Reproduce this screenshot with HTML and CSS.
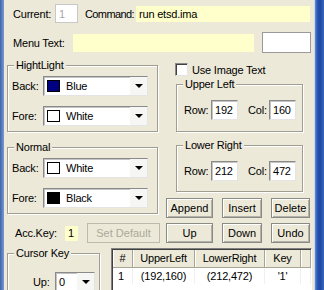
FILE: index.html
```html
<!DOCTYPE html>
<html lang="en">
<head>
    <meta charset="UTF-8">
    <title>Menu Editor</title>
    <link rel="stylesheet" href="styles.css">
</head>
<body>
<div class="window">
    <div class="edge-left"></div>
    <div class="main">

        <div class="row-top">
            <span class="lbl lbl-current">Current:</span>
            <span class="field current">1</span>
            <span class="lbl lbl-command">Command:</span>
            <span class="field yellow command">run etsd.ima</span>
        </div>

        <div class="row-menu">
            <span class="lbl lbl-menu">Menu Text:</span>
            <span class="field yellow menu-text"></span>
            <span class="field menu-extra"></span>
        </div>

        <div class="middle">
            <div class="col-left">
                <div class="group color-group">
                    <span class="legend">HightLight</span>
                    <div class="combo-row first">
                        <span class="lbl lbl-side">Back:</span>
                        <div class="combo">
                            <span class="swatch blue"></span>
                            <span class="combo-text">Blue</span>
                            <span class="arrow"></span>
                        </div>
                    </div>
                    <div class="combo-row second">
                        <span class="lbl lbl-side">Fore:</span>
                        <div class="combo">
                            <span class="swatch white"></span>
                            <span class="combo-text">White</span>
                            <span class="arrow"></span>
                        </div>
                    </div>
                </div>

                <div class="group color-group normal">
                    <span class="legend">Normal</span>
                    <div class="combo-row first">
                        <span class="lbl lbl-side">Back:</span>
                        <div class="combo">
                            <span class="swatch white"></span>
                            <span class="combo-text">White</span>
                            <span class="arrow"></span>
                        </div>
                    </div>
                    <div class="combo-row second">
                        <span class="lbl lbl-side">Fore:</span>
                        <div class="combo">
                            <span class="swatch black"></span>
                            <span class="combo-text">Black</span>
                            <span class="arrow"></span>
                        </div>
                    </div>
                </div>

                <div class="acc-row">
                    <span class="lbl lbl-acc">Acc.Key:</span>
                    <span class="field yellow acc-key">1</span>
                    <button class="btn disabled set-default">Set Default</button>
                </div>
            </div>

            <div class="col-right">
                <div class="check-row">
                    <span class="checkbox"></span>
                    <span class="lbl">Use Image Text</span>
                </div>

                <div class="group pos-group">
                    <span class="legend">Upper Left</span>
                    <div class="pos-row">
                        <span class="lbl lbl-row">Row:</span>
                        <span class="field num">192</span>
                        <span class="lbl lbl-col">Col:</span>
                        <span class="field num">160</span>
                    </div>
                </div>

                <div class="group pos-group lower">
                    <span class="legend">Lower Right</span>
                    <div class="pos-row">
                        <span class="lbl lbl-row">Row:</span>
                        <span class="field num">212</span>
                        <span class="lbl lbl-col">Col:</span>
                        <span class="field num">472</span>
                    </div>
                </div>

                <div class="btn-row first">
                    <button class="btn w-wide">Append</button>
                    <button class="btn w-mid">Insert</button>
                    <button class="btn w-narrow">Delete</button>
                </div>
                <div class="btn-row second">
                    <button class="btn w-wide">Up</button>
                    <button class="btn w-mid">Down</button>
                    <button class="btn w-narrow">Undo</button>
                </div>
            </div>
        </div>

        <div class="bottom">
            <div class="group cursor-group">
                <span class="legend">Cursor Key</span>
                <div class="cursor-row">
                    <span class="lbl lbl-up">Up:</span>
                    <div class="combo small">
                        <span class="combo-text">0</span>
                        <span class="arrow"></span>
                    </div>
                </div>
            </div>

            <div class="list">
                <div class="list-head">
                    <span>#</span>
                    <span>UpperLeft</span>
                    <span>LowerRight</span>
                    <span>Key</span>
                    <span></span>
                </div>
                <div class="list-row">
                    <span>1</span>
                    <span>(192,160)</span>
                    <span>(212,472)</span>
                    <span>'1'</span>
                    <span></span>
                </div>
            </div>
        </div>

    </div>
    <div class="edge-right"></div>
</div>
</body>
</html>
```

FILE: styles.css
```css
* {
    box-sizing: border-box;
}

body {
    margin: 0;
    background-color: #ece9d8;
    font-family: "Liberation Sans", Arial, sans-serif;
    font-size: 11px;
    letter-spacing: -0.2px;
    color: #000;
}

.window {
    display: flex;
    width: 324px;
    height: 290px;
    overflow: hidden;
}

.edge-left {
    flex: none;
    width: 4px;
    background: linear-gradient(to right, #3d63aa, #7b9ad0);
}

.edge-right {
    flex: none;
    width: 10px;
    background: linear-gradient(to right, #c9d6ec 0, #c9d6ec 1px, #6c90d2 1px, #2d5bb8 3px, #1c47a0 6px, #3a66c0 10px);
}

.main {
    flex: none;
    width: 310px;
}

.lbl {
    flex: none;
    white-space: nowrap;
}

/* inputs */
.field {
    flex: none;
    display: flex;
    align-items: center;
    padding-left: 3px;
    background-color: #fff;
    border: 1px solid;
    border-color: #8a8a8a #e4e4e4 #e4e4e4 #8a8a8a;
    box-shadow: inset 1px 1px #c4c4c4;
}

.field.yellow {
    background-color: #ffffcc;
    border-color: #ece9d8;
    box-shadow: none;
}

/* top rows */
.row-top {
    display: flex;
    align-items: center;
    height: 19px;
    margin-top: 4px;
    padding-left: 9px;
}

.lbl-current {
    width: 42px;
}

.current {
    width: 23px;
    height: 19px;
    color: #a8a8a8;
    border-color: #c8c8c8;
    box-shadow: none;
}

.lbl-command {
    width: 50px;
    margin-left: 7px;
    letter-spacing: -0.6px;
}

.command {
    width: 176px;
    height: 18px;
}

.row-menu {
    display: flex;
    align-items: center;
    height: 21px;
    margin-top: 9px;
    padding-left: 9px;
}

.lbl-menu {
    width: 59px;
}

.menu-text {
    width: 183px;
    height: 20px;
}

.menu-extra {
    width: 49px;
    height: 21px;
    margin-left: 7px;
    border-color: #9a9a9a;
    box-shadow: none;
}

/* group boxes */
.group {
    border: 1px solid #a09d92;
    box-shadow: inset 1px 1px #fff, 1px 1px #fff;
}

.legend {
    display: block;
    width: max-content;
    height: 13px;
    line-height: 13px;
    margin: -7px 0 0 6px;
    padding: 0 2px;
    background-color: #ece9d8;
}

.middle {
    display: flex;
    margin-top: 5px;
}

.col-left {
    width: 151px;
    margin-left: 3px;
    padding-top: 7px;
}

.color-group {
    height: 67px;
}

.color-group.normal {
    margin-top: 15px;
}

.combo-row {
    display: flex;
    align-items: center;
    padding-left: 4px;
}

.combo-row.first {
    margin-top: 4px;
}

.combo-row.second {
    margin-top: 10px;
}

.lbl-side {
    width: 31px;
}

.combo {
    display: flex;
    align-items: center;
    width: 105px;
    height: 20px;
    background-color: #fff;
    border: 1px solid;
    border-color: #8a8a8a #e4e4e4 #e4e4e4 #8a8a8a;
    box-shadow: inset 1px 1px #c4c4c4;
}

.swatch {
    flex: none;
    width: 13px;
    height: 12px;
    margin-left: 3px;
    border: 1px solid #000;
}

.swatch.blue {
    background-color: #000080;
}

.swatch.white {
    background-color: #fff;
}

.swatch.black {
    background-color: #000;
}

.combo-text {
    margin-left: 6px;
}

.arrow {
    flex: none;
    display: flex;
    align-items: center;
    justify-content: center;
    width: 17px;
    height: 18px;
    margin-left: auto;
    background-color: #f6f6f4;
}

.arrow::after {
    content: "";
    border-left: 4px solid transparent;
    border-right: 4px solid transparent;
    border-top: 4px solid #000;
}

.acc-row {
    display: flex;
    align-items: center;
    height: 20px;
    margin-top: 9px;
    padding-left: 8px;
}

.lbl-acc {
    width: 49px;
}

.acc-key {
    width: 15px;
    height: 17px;
}

/* buttons */
.btn {
    flex: none;
    height: 20px;
    padding: 0;
    font: inherit;
    color: #000;
    background-color: #ece9d8;
    border: 1px solid #8b8b85;
    box-shadow: inset 1px 1px #fff, inset -1px -1px #b4b2a8;
}

.btn.disabled {
    color: #aca899;
    border-color: #bdbab0;
    box-shadow: none;
}

.set-default {
    width: 73px;
    margin-left: 8px;
}

.col-right {
    width: 144px;
    margin-left: 8px;
}

.check-row {
    display: flex;
    align-items: center;
    height: 13px;
    margin-top: 5px;
    padding-left: 9px;
}

.checkbox {
    width: 13px;
    height: 13px;
    margin-right: 4px;
    background-color: #fff;
    border: 1px solid;
    border-color: #8a8a8a #e4e4e4 #e4e4e4 #8a8a8a;
    box-shadow: inset 1px 1px #404040;
}

.pos-group {
    width: 127px;
    height: 48px;
    margin: 8px 0 0 10px;
}

.pos-group.lower {
    height: 47px;
    margin-top: 13px;
}

.pos-row {
    display: flex;
    align-items: center;
    margin-top: 9px;
    padding-left: 7px;
}

.lbl-row {
    width: 27px;
}

.lbl-col {
    width: 21px;
    margin-left: 10px;
}

.num {
    width: 27px;
    height: 20px;
}

.btn-row {
    display: flex;
    gap: 9px;
}

.btn-row.first {
    margin-top: 6px;
}

.btn-row.second {
    margin-top: 5px;
}

.w-wide {
    width: 47px;
}

.w-mid {
    width: 40px;
}

.w-narrow {
    width: 39px;
}

/* bottom */
.bottom {
    display: flex;
    margin-top: 5px;
}

.cursor-group {
    width: 93px;
    height: 50px;
    margin: 5px 0 0 3px;
}

.cursor-row {
    display: flex;
    align-items: center;
    margin-top: 12px;
    padding-left: 25px;
}

.lbl-up {
    width: 22px;
}

.combo.small {
    width: 40px;
}

.combo.small .combo-text {
    margin-left: 3px;
}

.list {
    width: 201px;
    height: 50px;
    margin-left: 11px;
    background-color: #fff;
    border: 1px solid;
    border-color: #808080 #fff #fff #808080;
    box-shadow: inset 1px 1px #404040;
    padding: 1px 0 0 1px;
}

.list-head,
.list-row {
    display: grid;
    grid-template-columns: 20px 62px 70px 36px 1fr;
}

.list-head span {
    height: 18px;
    line-height: 17px;
    text-align: center;
    background-color: #ece9d8;
    border-right: 1px solid #a8a597;
    border-bottom: 1px solid #a8a597;
    box-shadow: inset 1px 0 #fff;
}

.list-row span {
    height: 16px;
    line-height: 16px;
    text-align: center;
    border-right: 1px solid #f0f0f0;
}

.list-row span:first-child {
    text-align: left;
    padding-left: 5px;
}
```
